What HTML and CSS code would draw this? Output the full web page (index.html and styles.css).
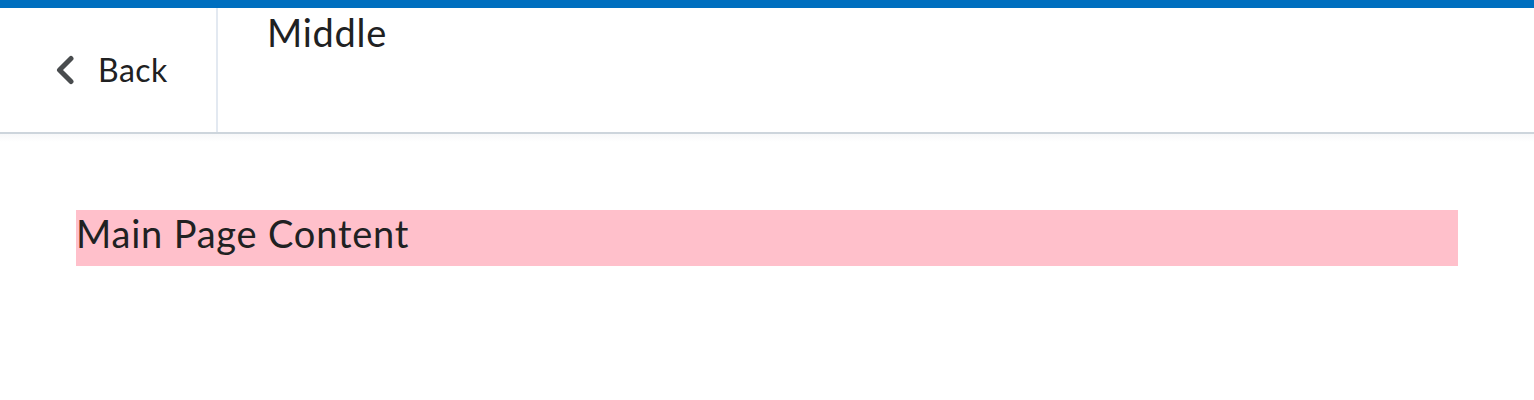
FILE: index.html
```html
<!DOCTYPE html>
<html lang="en">
<head>
<meta charset="utf-8">
<title>Page</title>
<link rel="stylesheet" href="styles.css">
</head>
<body>
<header class="nav">
  <div class="nav-back">
    <a class="back-link" href="#">
      <svg class="chev" width="20" height="30" viewBox="0 0 20 30" aria-hidden="true">
        <path d="M16 3.5 L4.5 15 L16 26.5" fill="none" stroke="#494c4e" stroke-width="5" stroke-linecap="round" stroke-linejoin="round"/>
      </svg>
      <span class="back-text">Back</span>
    </a>
  </div>
  <div class="nav-middle">Middle</div>
</header>
<div class="shadow"></div>
<main class="content">
  <div class="main-box">Main Page Content</div>
</main>
</body>
</html>
```
FILE: styles.css
```css
html, body {
  margin: 0;
  padding: 0;
  background: #ffffff;
  font-family: Lato, "Noto Sans", sans-serif;
  color: #202122;
}
.nav {
  display: flex;
  height: 124px;
  border-top: 8px solid #006fbf;
  border-bottom: 2px solid #cdd5dc;
}
.nav-back {
  flex: none;
  width: 218px;
  box-sizing: border-box;
  border-right: 2px solid #e3e9f1;
  display: flex;
  align-items: center;
}
.back-link {
  display: flex;
  align-items: center;
  gap: 23px;
  padding-left: 55px;
  text-decoration: none;
  color: #202122;
}
.chev {
  display: block;
}
.back-text {
  font-size: 32px;
  line-height: 40px;
  letter-spacing: 0.5px;
}
.nav-middle {
  padding-left: 49px;
  padding-top: 1px;
  font-size: 38px;
  line-height: 46px;
  letter-spacing: 0.7px;
}
.shadow {
  height: 8px;
  background: linear-gradient(#f7f8f9, #ffffff);
}
.content {
  padding: 68px 76px 0;
}
.main-box {
  background: #ffc0cb;
  font-size: 38px;
  line-height: 46px;
  padding-bottom: 10px;
  letter-spacing: 0.8px;
}
```
